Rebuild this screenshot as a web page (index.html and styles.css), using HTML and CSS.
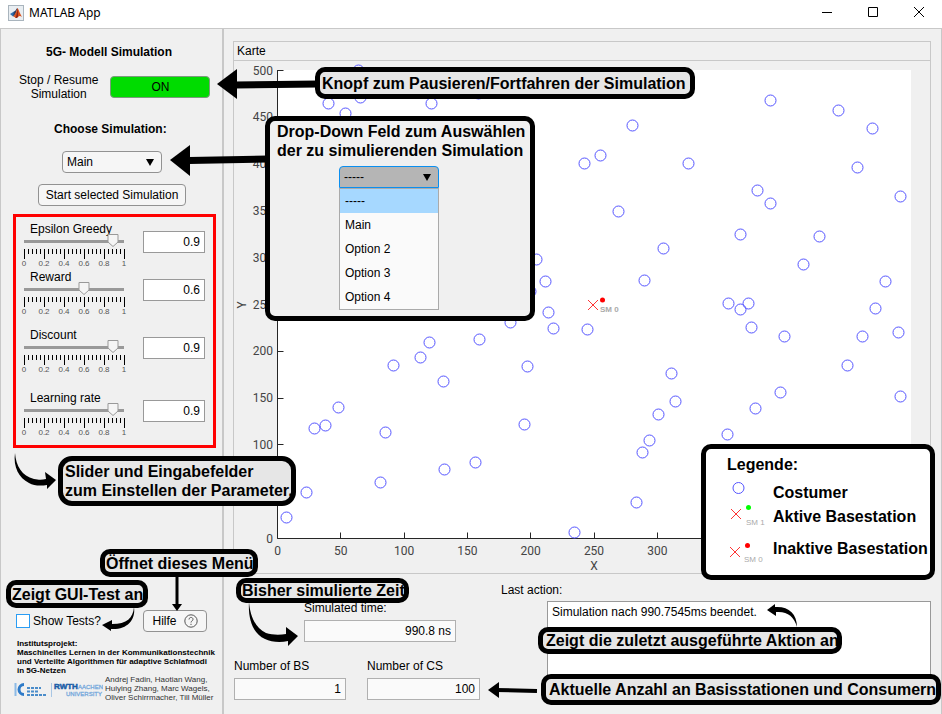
FILE: index.html
```html
<!DOCTYPE html>
<html lang="de">
<head>
<meta charset="utf-8">
<title>MATLAB App</title>
<link rel="stylesheet" href="styles.css">
</head>
<body>
<div class="window">
  <header class="titlebar">
    <svg class="app-icon" viewBox="0 0 16 16" aria-hidden="true">
      <rect x="0.5" y="0.5" width="15" height="15" fill="#e9eef2" stroke="#a9b4bd"/>
      <path d="M2 9 L6 6.5 L7.5 8 L5 11.5 Z" fill="#2f6fae"/>
      <path d="M6 6.5 C8 6 8.5 3 9.5 3 C8.5 7 7.5 10 5 11.5 Z" fill="#2c3f66"/>
      <path d="M9.5 3 C11 5 12 9 14 12 C12.5 11 11.5 10.5 10 12 C9 13 8 13 7.5 13 C7 12 6 11.5 5 11.5 C8 9 8.5 5 9.5 3 Z" fill="#d9531e"/>
      <path d="M9.5 3 C10 6 10 9 10 12 C9 13 8 13 7.5 13 C9 10 9 6 9.5 3 Z" fill="#8d2516"/>
    </svg>
    <span class="title">MATLAB App</span>
    <div class="window-buttons">
      <button aria-label="Minimieren"><svg viewBox="0 0 12 12"><path d="M1 6.5H11"/></svg></button>
      <button aria-label="Maximieren"><svg viewBox="0 0 12 12"><path d="M1.5 1.5H10.5V10.5H1.5Z"/></svg></button>
      <button aria-label="Schließen"><svg viewBox="0 0 12 12"><path d="M1 1L11 11M11 1L1 11"/></svg></button>
    </div>
  </header>

  <main class="app">
    <aside class="sidebar">
      <h1>5G- Modell Simulation</h1>
      <div class="run-row">
        <label for="run">Stop / Resume<br>Simulation</label>
        <button id="run" class="run">ON</button>
      </div>
      <label class="choose" for="sim">Choose Simulation:</label>
      <div class="select-wrap">
        <select id="sim" class="sim-select"><option>Main</option><option>Option 2</option><option>Option 3</option><option>Option 4</option></select>
        <svg class="caret" viewBox="0 0 8 7" aria-hidden="true"><path d="M0 0H8L4 7Z"/></svg>
      </div>
      <button class="plain start">Start selected Simulation</button>

      <section class="params" id="params"></section>

      <footer class="side-footer">
        <div class="tools">
          <label class="check"><input type="checkbox">Show Tests?</label>
          <button class="plain help">Hilfe
            <svg viewBox="0 0 14 14" aria-hidden="true"><circle cx="7" cy="7" r="6.2"/><path d="M5 5.5C5 2.8 9 2.8 9 5.3C9 7 7 6.8 7 8.5M7 9.8V11"/></svg>
          </button>
        </div>
        <p class="project">Institutsprojekt:<br>Maschinelles Lernen in der Kommunikationstechnik<br>und Verteilte Algorithmen für adaptive Schlafmodi<br>in 5G-Netzen</p>
        <div class="credits">
          <svg class="logos" viewBox="0 0 90 18" role="img" aria-label="RWTH Aachen University">
            <path d="M2.5 3V16" stroke="#8dbbe6" stroke-width="2"/>
            <path d="M11 4.5A5 5 0 1 0 11 14.5" fill="none" stroke="#2d7ac8" stroke-width="3"/>
            <path d="M14 8H28M14 11.5H26M14 15H34" stroke="#4a8cca" stroke-width="2" stroke-dasharray="3 1"/>
            <path d="M38.5 3V17" stroke="#a8c6e4"/>
            <text class="logo-rwth" x="41" y="9">RWTH</text>
            <text class="logo-light" x="65" y="9">AACHEN</text>
            <text class="logo-light" x="53" y="16">UNIVERSITY</text>
          </svg>
          <p>Andrej Fadin, Haotian Wang,<br>Huiying Zhang, Marc Wagels,<br>Oliver Schirrmacher, Till Müller</p>
        </div>
      </footer>
    </aside>

    <div class="content">
      <section class="map-panel">
        <h2>Karte</h2>
        <svg id="map" class="map" viewBox="234 61 696 512" role="img" aria-label="Karte"></svg>
      </section>
      <section class="status">
        <div class="numbers">
          <div class="field time"><label for="time">Simulated time:</label><input id="time" value="990.8 ns" readonly></div>
          <div class="counts">
            <div class="field"><label for="bs">Number of BS</label><input id="bs" value="1" readonly></div>
            <div class="field"><label for="cs">Number of CS</label><input id="cs" value="100" readonly></div>
          </div>
        </div>
        <div class="action">
          <label for="log">Last action:</label>
          <textarea id="log" readonly>Simulation nach 990.7545ms beendet.</textarea>
        </div>
      </section>
    </div>
  </main>

  <svg class="arrows" width="942" height="714" viewBox="0 0 942 714" aria-hidden="true">
    <path class="line" d="M235 85L318 84" stroke-width="7"/>
    <path d="M217 84L237 69V99Z"/>
    <path class="line" d="M189 160.5L268 159" stroke-width="7"/>
    <path d="M170 160L190 145V176Z"/>
    <path d="M15 453C16 466 22 476 34 479C39 480 42 480 46 479L45 472L56 480L47 489V485C41 486 34 486 29 483C19 478 13 467 15 453Z"/>
    <path class="line" d="M177 574V605" stroke-width="3"/>
    <path d="M172 604H182L177 611Z"/>
    <path d="M134 607C133 618 127 624 112 624V620L102 625L111 631V629C126 630 136 621 134 607Z"/>
    <path d="M249 602C250 615 255 628 266 633C272 635 280 635 286 634V627L298 636L288 646V641C280 643 271 642 265 639C252 633 248 618 249 602Z"/>
    <path class="line" d="M495 690L537 691" stroke-width="4"/>
    <path d="M488 690L499 682V698Z"/>
    <path d="M797 627C797 613 788 606 775 607V604L767 610L776 616V612C787 611 794 616 797 627Z"/>
  </svg>

  <div class="note n-pause">Knopf zum Pausieren/Fortfahren der Simulation</div>
  <div class="note n-drop">
    <p>Drop-Down Feld zum Auswählen<br>der zu simulierenden Simulation</p>
    <div class="open-select">
      <button class="open-head">-----<svg class="caret" viewBox="0 0 8 7" aria-hidden="true"><path d="M0 0H8L4 7Z"/></svg></button>
      <ul><li class="selected">-----</li><li>Main</li><li>Option 2</li><li>Option 3</li><li>Option 4</li></ul>
    </div>
  </div>
  <div class="note n-slider">Slider und Eingabefelder<br>zum Einstellen der Parameter.</div>
  <div class="note n-help">Öffnet dieses Menü</div>
  <div class="note n-test">Zeigt GUI-Test an</div>
  <div class="note n-time">Bisher simulierte Zeit</div>
  <div class="note n-action">Zeigt die zuletzt ausgeführte Aktion an</div>
  <div class="note n-count">Aktuelle Anzahl an Basisstationen und Consumern</div>
  <div class="note n-legend">
    <h3>Legende:</h3>
    <dl>
      <dt><svg viewBox="0 0 40 24"><circle class="cs" cx="12.5" cy="9" r="5.5"/></svg></dt><dd>Costumer</dd>
      <dt><svg viewBox="0 0 40 24"><path class="bs" d="M5 6L15 16M15 6L5 16"/><circle cx="22.5" cy="4.5" r="2.5" fill="#0f0"/><text x="20" y="22">SM 1</text></svg></dt><dd>Aktive Basestation</dd>
      <dt><svg viewBox="0 0 40 24"><path class="bs" d="M4 12L14 22M14 12L4 22"/><circle cx="21.5" cy="10.5" r="2.5" fill="#f00"/><text x="18" y="27">SM 0</text></svg></dt><dd>Inaktive Basestation</dd>
    </dl>
  </div>
</div>
<script src="app.js"></script>
</body>
</html>
```
FILE: styles.css
```css
* { box-sizing: border-box; }
body { margin: 0; background: #f0f0f0; color: #000; font: 12px/14px "Liberation Sans", Arial, sans-serif; }
h1, h2, h3, p, ul, dl, dd { margin: 0; padding: 0; }
button, input, select, textarea { font: inherit; color: inherit; margin: 0; }
.window { position: relative; min-height: 100vh; display: flex; flex-direction: column; overflow: hidden; }

.titlebar { height: 28px; padding-left: 8px; display: flex; align-items: center; gap: 5px; background: #fff; }
.app-icon { width: 16px; height: 16px; margin-bottom: 2px; }
.title { font: 12px/16px "Noto Sans", sans-serif; padding-bottom: 2px; }
.window-buttons { margin-left: auto; display: flex; }
.window-buttons button { width: 46px; height: 28px; border: 0; padding: 0 0 4px; background: none; display: grid; place-items: center; }
.window-buttons svg { width: 12px; height: 12px; fill: none; stroke: #000; }

.app { flex: 1; display: grid; grid-template-columns: 223px 1fr; border: 1px solid #c8c8c8; border-bottom: 0; }
.sidebar { border-right: 2px solid #c8c8c8; display: flex; flex-direction: column; align-items: flex-start; padding: 16px 0 0 12px; }
h1 { font-size: 12px; line-height: 14px; padding-left: 33px; }
.run-row { display: flex; align-items: center; gap: 12px; padding-left: 6px; margin-top: 14px; text-align: center; }
.run { width: 100px; height: 22px; border: 1px solid #7d9a7d; border-radius: 4px; background: #00dc00; padding: 0; }
.choose { font-weight: bold; margin: 21px 0 15px 41px; }
.select-wrap { position: relative; margin-left: 49px; }
.sim-select { appearance: none; width: 100px; height: 22px; border: 1px solid #929292; border-radius: 4px; background: #f6f6f6; padding: 0 4px; display: block; }
.caret { width: 8px; height: 7px; }
.select-wrap .caret { position: absolute; right: 8px; top: 8px; pointer-events: none; }
.plain { border: 1px solid #929292; border-radius: 4px; background: #f6f6f6; height: 22px; padding: 0; }
.start { width: 148px; margin: 11px 0 0 25px; }

.params { width: 203px; margin-top: 8px; border: 3px solid #f00; padding: 5px 8px 0 7px; height: 234px; }
.param { display: grid; grid-template-columns: 104px 62px; justify-content: space-between; height: 48px; }
.param.tall { height: 58px; }
.param.taller { height: 63px; }
.slider label { display: block; padding-left: 7px; }
.slider input { appearance: none; display: block; width: 110px; height: 13px; margin: -2px 0 0 -4px; background: linear-gradient(#999, #999) 50% 6px / 100px 3px no-repeat; }
.slider input::-webkit-slider-thumb { appearance: none; width: 12px; height: 13px; border: 0; background: url("data:image/svg+xml,%3Csvg xmlns='http://www.w3.org/2000/svg' viewBox='0 0 12 13'%3E%3Cpath d='M1 .5H11V8L6 12.5L1 8Z' fill='%23f5f5f5' stroke='%23999'/%3E%3C/svg%3E") center / 12px 13px no-repeat; }
.scale { display: block; width: 112px; height: 21px; margin: 2px 0 0 -5px; overflow: visible; }
.scale path { stroke: #000; fill: none; }
.scale text { font-size: 8px; fill: #555; text-anchor: middle; }
.value { height: 22px; border: 1px solid #999; background: #fff; text-align: right; padding: 0 4px; margin-top: 9px; width: 100%; }

.side-footer { margin-top: auto; padding-bottom: 12px; }
.tools { display: flex; align-items: center; justify-content: space-between; width: 191px; margin-left: 3px; }
.check { display: flex; align-items: center; gap: 3px; }
.check input { appearance: none; width: 14px; height: 14px; border: 1px solid #2a9df4; background: #fff; }
.help { width: 64px; display: flex; align-items: center; justify-content: center; gap: 7px; }
.help svg { width: 14px; height: 14px; fill: none; stroke: #555; }
.project { font-size: 8px; line-height: 9px; font-weight: bold; margin: 7px 0 0 4px; white-space: nowrap; }
.credits { display: flex; gap: 2px; align-items: center; }
.credits p { font-size: 8px; line-height: 9px; color: #333; white-space: nowrap; }
.logos { width: 90px; height: 18px; }
.logo-rwth { font-size: 8px; font-weight: bold; fill: #1d5fa8; stroke: #1d5fa8; stroke-width: 0.5px; }
.logo-light { font-size: 6px; fill: #76a9dc; stroke: #76a9dc; stroke-width: 0.3px; }

.content { padding: 12px 10px 0 9px; min-width: 0; }
.map-panel { border: 1px solid #c8c8c8; }
h2 { font-size: 12px; line-height: 18px; font-weight: normal; padding-left: 3px; border-bottom: 1px solid #c8c8c8; }
.map { display: block; width: 100%; }
.axis { stroke: #262626; fill: none; }
.tick { font: 12px Roboto, sans-serif; fill: #444; }
.cs { fill: none; stroke: #55f; }
.bs { fill: none; stroke: #f33; }
.sm { font-size: 8px; font-weight: bold; fill: #aaa; }
.middle { text-anchor: middle; }
.end { text-anchor: end; }

.status { display: grid; grid-template-columns: 267px 1fr; padding: 9px 0 0 1px; }
.numbers { padding-top: 18px; }
.field { display: flex; flex-direction: column; gap: 5px; }
.field input { height: 22px; width: 100%; border: 1px solid #b0b0b0; background: #fafafa; text-align: right; padding: 0 4px; }
.time { width: 152px; margin-left: 70px; }
.counts { display: grid; grid-template-columns: 112px 113px; gap: 21px; margin-top: 17px; }
.action { display: grid; grid-template-columns: 46px 1fr; grid-template-rows: 18px 90px; }
.action label { grid-column: 1 / -1; }
.action textarea { grid-column: 2; resize: none; border: 1px solid #999; background: #fff; padding: 3px 4px; }

.arrows { position: absolute; left: 0; top: 0; pointer-events: none; }
.line { stroke: #000; }
.note { position: absolute; border: 5px solid #000; border-radius: 10px; background: #e6e6e6; font-size: 16px; line-height: 19px; font-weight: bold; white-space: nowrap; }
.n-pause { left: 315px; top: 67px; width: 380px; height: 32px; padding: 2px; }
.n-drop { left: 265px; top: 116px; width: 270px; height: 205px; padding: 1px 7px; background: #f0f0f0; }
.n-slider { left: 58px; top: 456px; width: 238px; height: 50px; padding: 1px 2px; border-radius: 14px; }
.n-help { left: 100px; top: 549px; width: 158px; height: 28px; padding-left: 1px; }
.n-test { left: 6px; top: 580px; width: 142px; height: 28px; padding-left: 1px; }
.n-time { left: 236px; top: 578px; width: 173px; height: 25px; line-height: 15px; padding-left: 1px; }
.n-action { left: 538px; top: 627px; width: 304px; height: 27px; line-height: 17px; padding-left: 3px; }
.n-count { left: 541px; top: 674px; width: 400px; height: 31px; line-height: 21px; padding-left: 3px; }
.n-legend { left: 701px; top: 444px; width: 234px; height: 136px; background: #fff; padding: 6px 0 0 20px; }
.n-legend h3 { font-size: 16px; line-height: 19px; padding-left: 1px; }
.n-legend dl { display: grid; grid-template-columns: 40px 1fr; column-gap: 7px; grid-template-rows: 24px 32px 28px; margin-top: 5px; align-items: start; }
.n-legend dd { padding-top: 4px; }
.n-legend dt svg { width: 40px; height: 24px; display: block; overflow: visible; }
.n-legend text { font-size: 8px; font-weight: normal; fill: #aaa; }

.open-select { width: 100px; margin: 6px 0 0 62px; font-size: 12px; line-height: 24px; font-weight: normal; }
.open-head { width: 100%; height: 22px; border: 1px solid #0a8ff0; border-radius: 4px 4px 0 0; background: #b5b5b5; padding: 0 7px 0 4px; display: flex; align-items: center; justify-content: space-between; }
.open-select ul { list-style: none; border: 1px solid #aaa; background: #fafafa; }
.open-select li { padding-left: 5px; height: 24px; }
.open-select .selected { background: #a6d8ff; }
```
FILE: app.js
```js
const params = [
  ["Epsilon Greedy", 0.9, ""],
  ["Reward", 0.6, "tall"],
  ["Discount", 0.9, "taller"],
  ["Learning rate", 0.9, ""]
];
let ticks = "";
for (let i = 0; i <= 25; i++) {
  ticks += `M${6.5 + i * 4} 0V${i % 5 ? 5 : 10}`;
}
const labels = [0, 0.2, 0.4, 0.6, 0.8, 1]
  .map((v, i) => `<text x="${6 + i * 20}" y="17">${v}</text>`).join("");
document.getElementById("params").innerHTML = params.map(([name, value, size], i) => `
  <div class="param ${size}">
    <div class="slider">
      <label for="p${i}">${name}</label>
      <input id="p${i}" type="range" min="0" max="1" step="0.1" value="${value}">
      <svg class="scale" viewBox="0 0 112 21" aria-hidden="true"><path d="${ticks}"/>${labels}</svg>
    </div>
    <div><input class="value" aria-label="${name}" value="${value}"></div>
  </div>`).join("");

const customers = [
  [358,70],[328,103],[345,113],[360,97],[431,103],[478,93],[632,125],[600,155],[584,163],[688,163],
  [770,100],[838,110],[872,128],[857,167],[757,190],[770,203],[900,196],[618,211],[740,234],[819,236],
  [663,248],[803,264],[644,280],[885,281],[536,259],[545,281],[530,291],[548,312],[553,328],[587,329],
  [510,322],[728,303],[740,309],[748,303],[751,327],[784,336],[875,308],[862,336],[898,332],[847,365],
  [900,396],[780,392],[755,408],[727,434],[671,373],[675,401],[658,414],[649,440],[642,452],[636,502],
  [574,532],[429,342],[420,357],[393,365],[443,381],[479,339],[527,366],[338,407],[325,425],[314,428],
  [385,432],[524,424],[475,462],[444,469],[380,482],[306,492],[286,517]
];
const left = 277.5, bottom = 538.5, xStep = 63.3, yStep = 46.8;
let map = `<rect x="277" y="70" width="634" height="469" fill="#fff"/>`;
let axis = `M${left} 70V${bottom}H911`;
let text = "";
for (let i = 0; i <= 10; i++) {
  const x = left + i * xStep, y = bottom - i * yStep;
  axis += `M${Math.floor(x) + 0.5} ${bottom}v-6M${left} ${Math.floor(y) + 0.5}h6`;
  // the legend box covers the x labels above 300 and the note covers y = 50
  if (i <= 6) text += `<text class="tick middle" x="${x}" y="555">${i * 50}</text>`;
  if (i !== 1) text += `<text class="tick end" x="273" y="${y + 4}">${i * 50}</text>`;
}
map += `<path class="axis" d="${axis}"/>${text}`;
map += `<text class="tick middle" x="594" y="570">X</text><text class="tick middle" transform="translate(246 305) rotate(-90)">Y</text>`;
map += customers.map(([x, y]) => `<circle class="cs" cx="${x + 0.5}" cy="${y + 0.5}" r="5.5"/>`).join("");
map += `<path class="bs" d="M588 300L598 310M598 300L588 310"/><circle cx="602.5" cy="300" r="2.5" fill="#f00"/><text class="sm" x="600" y="312">SM 0</text>`;
document.getElementById("map").innerHTML = map;
```
